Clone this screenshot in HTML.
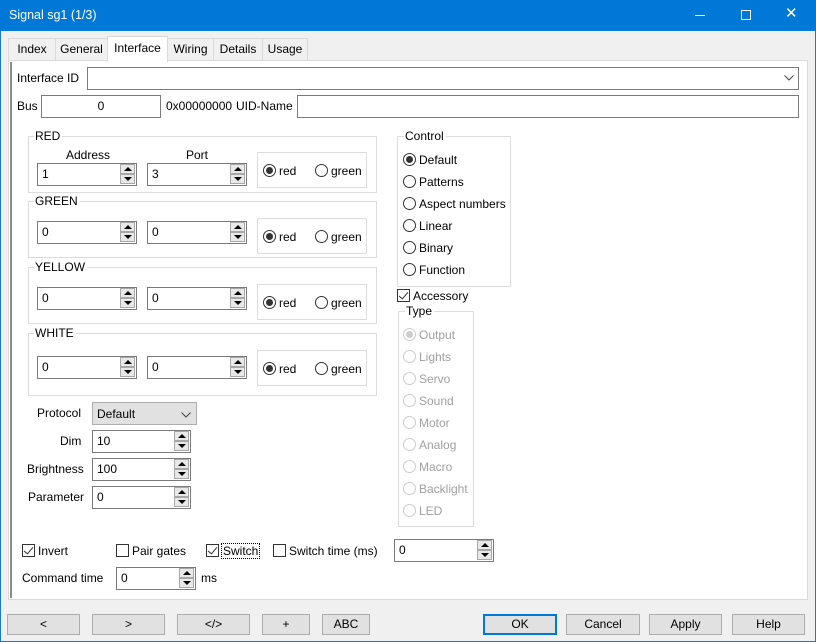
<!DOCTYPE html>
<html><head><meta charset="utf-8"><style>
*{margin:0;padding:0;box-sizing:border-box}
body{width:816px;height:642px;background:#f0f0f0;font-family:"Liberation Sans",sans-serif;font-size:12px;color:#000;position:relative;overflow:hidden}
.a{position:absolute}
.t{position:absolute;line-height:14px;white-space:nowrap}
.win{position:absolute;left:0;top:0;width:816px;height:642px;border:1px solid #1979ca}
.title{position:absolute;left:0;top:0;width:816px;height:31px;background:#0078d7;color:#fff}
.tab{position:absolute;top:38px;height:23px;background:#f0f0f0;border:1px solid #d9d9d9;border-bottom:none;line-height:20px;text-align:center}
.panel{position:absolute;left:8px;top:60px;width:800px;height:540px;background:#fff;border:1px solid #d9d9d9}
.in{position:absolute;height:23px;border:1px solid #7a7a7a;background:#fff}
.sp{position:absolute;height:23px;border:1px solid #7a7a7a;background:#fff}
.sp span{position:absolute;left:4px;top:3px;line-height:14px}
.u,.d{position:absolute;right:1px;width:15px;height:10px;background:#e8e8e8;border:1px solid #a8a8a8}
.u{top:0}.d{top:10px}
.u:after{content:"";position:absolute;left:3px;top:2px;border-left:4px solid transparent;border-right:4px solid transparent;border-bottom:4px solid #000}
.d:after{content:"";position:absolute;left:3px;top:2px;border-left:4px solid transparent;border-right:4px solid transparent;border-top:4px solid #000}
.g{position:absolute;border:1px solid #dcdcdc}
.gt{position:absolute;background:#fff;line-height:14px;padding:0 2px 0 1px;top:-8px;left:5px}
.r{position:absolute;width:13px;height:13px;border:1px solid #333;border-radius:50%;background:#fff}
.r.on:after{content:"";position:absolute;left:2px;top:2px;width:7px;height:7px;border-radius:50%;background:#333}
.r.dis{border-color:#ccc}
.r.dis.on:after{background:#ccc}
.c{position:absolute;width:13px;height:13px;border:1px solid #333;background:#fff}
.c.on:after{content:"";position:absolute;left:3px;top:0px;width:4px;height:8px;border:solid #333;border-width:0 1px 1px 0;transform:rotate(40deg)}
.gr{color:#a0a0a0}
.btn{position:absolute;top:614px;height:21px;background:#e1e1e1;border:1px solid #adadad;text-align:center;line-height:19px}
</style></head><body>
<div class="win"></div>
<div class="title">
<div class="t" style="left:9px;top:8px;font-size:12.5px">Signal sg1 (1/3)</div>
<div class="a" style="left:695px;top:15px;width:10px;height:1px;background:#fff"></div>
<div class="a" style="left:741px;top:10px;width:10px;height:10px;border:1px solid #fff"></div>
<div class="t" style="left:785px;top:7px;font-size:15px">✕</div>
</div>
<div class="tab" style="left:8px;width:48px">Index</div>
<div class="tab" style="left:55px;width:53px">General</div>
<div class="tab" style="left:167px;width:47px">Wiring</div>
<div class="tab" style="left:213px;width:50px">Details</div>
<div class="tab" style="left:262px;width:46px">Usage</div>
<div class="panel"></div>
<div class="a" style="left:10px;top:62px;width:2px;height:536px;background:#8a8a8a"></div>
<div class="tab" style="left:107px;top:36px;width:61px;height:26px;background:#fff;border-color:#d9d9d9;line-height:22px">Interface</div>

<div class="t" style="left:17px;top:71px">Interface ID</div>
<div class="in" style="left:87px;top:67px;width:712px"></div>
<svg class="a" style="left:784px;top:75px" width="10" height="6"><path d="M0.5 0.5 L5 5 L9.5 0.5" fill="none" stroke="#444" stroke-width="1"/></svg>
<div class="t" style="left:17px;top:99px">Bus</div>
<div class="in" style="left:41px;top:95px;width:120px"><div class="t" style="left:0;width:118px;text-align:center;top:3px">0</div></div>
<div class="t" style="left:166px;top:99px">0x00000000</div>
<div class="t" style="left:236px;top:99px">UID-Name</div>
<div class="in" style="left:297px;top:95px;width:502px"></div>

<div class="g" style="left:28px;top:136px;width:349px;height:57px"><div class="gt">RED</div></div>
<div class="t" style="left:66px;top:148px">Address</div>
<div class="t" style="left:186px;top:148px">Port</div>
<div class="sp" style="left:37px;top:163px;width:100px"><span>1</span><i class="u"></i><i class="d"></i></div>
<div class="sp" style="left:147px;top:163px;width:100px"><span>3</span><i class="u"></i><i class="d"></i></div>
<div class="g" style="left:257px;top:152px;width:110px;height:36px"></div>
<div class="r on" style="left:263px;top:164px"></div><div class="t" style="left:279px;top:164px">red</div>
<div class="r" style="left:315px;top:164px"></div><div class="t" style="left:331px;top:164px">green</div>

<div class="g" style="left:28px;top:201px;width:349px;height:57px"><div class="gt">GREEN</div></div>
<div class="sp" style="left:37px;top:221px;width:100px"><span>0</span><i class="u"></i><i class="d"></i></div>
<div class="sp" style="left:147px;top:221px;width:100px"><span>0</span><i class="u"></i><i class="d"></i></div>
<div class="g" style="left:257px;top:218px;width:110px;height:36px"></div>
<div class="r on" style="left:263px;top:230px"></div><div class="t" style="left:279px;top:230px">red</div>
<div class="r" style="left:315px;top:230px"></div><div class="t" style="left:331px;top:230px">green</div>

<div class="g" style="left:28px;top:267px;width:349px;height:57px"><div class="gt">YELLOW</div></div>
<div class="sp" style="left:37px;top:287px;width:100px"><span>0</span><i class="u"></i><i class="d"></i></div>
<div class="sp" style="left:147px;top:287px;width:100px"><span>0</span><i class="u"></i><i class="d"></i></div>
<div class="g" style="left:257px;top:284px;width:110px;height:36px"></div>
<div class="r on" style="left:263px;top:296px"></div><div class="t" style="left:279px;top:296px">red</div>
<div class="r" style="left:315px;top:296px"></div><div class="t" style="left:331px;top:296px">green</div>

<div class="g" style="left:28px;top:333px;width:349px;height:63px"><div class="gt">WHITE</div></div>
<div class="sp" style="left:37px;top:356px;width:100px"><span>0</span><i class="u"></i><i class="d"></i></div>
<div class="sp" style="left:147px;top:356px;width:100px"><span>0</span><i class="u"></i><i class="d"></i></div>
<div class="g" style="left:257px;top:350px;width:110px;height:36px"></div>
<div class="r on" style="left:263px;top:362px"></div><div class="t" style="left:279px;top:362px">red</div>
<div class="r" style="left:315px;top:362px"></div><div class="t" style="left:331px;top:362px">green</div>

<div class="t" style="left:37px;top:406px">Protocol</div>
<div class="a" style="left:92px;top:402px;width:105px;height:23px;background:#e1e1e1;border:1px solid #adadad"><div class="t" style="left:4px;top:4px">Default</div><svg class="a" style="left:88px;top:9px" width="10" height="6"><path d="M0.5 0.5 L5 5 L9.5 0.5" fill="none" stroke="#444" stroke-width="1"/></svg></div>
<div class="t" style="left:60px;top:434px">Dim</div>
<div class="sp" style="left:92px;top:430px;width:99px"><span>10</span><i class="u"></i><i class="d"></i></div>
<div class="t" style="left:27px;top:462px">Brightness</div>
<div class="sp" style="left:92px;top:458px;width:99px"><span>100</span><i class="u"></i><i class="d"></i></div>
<div class="t" style="left:28px;top:490px">Parameter</div>
<div class="sp" style="left:92px;top:486px;width:99px"><span>0</span><i class="u"></i><i class="d"></i></div>

<div class="g" style="left:397px;top:136px;width:114px;height:151px"><div class="gt" style="left:6px">Control</div></div>
<div class="r on" style="left:403px;top:153px"></div><div class="t" style="left:419px;top:153px">Default</div>
<div class="r" style="left:403px;top:175px"></div><div class="t" style="left:419px;top:175px">Patterns</div>
<div class="r" style="left:403px;top:197px"></div><div class="t" style="left:419px;top:197px">Aspect numbers</div>
<div class="r" style="left:403px;top:219px"></div><div class="t" style="left:419px;top:219px">Linear</div>
<div class="r" style="left:403px;top:241px"></div><div class="t" style="left:419px;top:241px">Binary</div>
<div class="r" style="left:403px;top:263px"></div><div class="t" style="left:419px;top:263px">Function</div>
<div class="c on" style="left:397px;top:289px"></div><div class="t" style="left:413px;top:289px">Accessory</div>

<div class="g" style="left:398px;top:311px;width:76px;height:216px"><div class="gt" style="left:6px">Type</div></div>
<div class="r dis on" style="left:403px;top:328px"></div><div class="t gr" style="left:419px;top:328px">Output</div>
<div class="r dis" style="left:403px;top:350px"></div><div class="t gr" style="left:419px;top:350px">Lights</div>
<div class="r dis" style="left:403px;top:372px"></div><div class="t gr" style="left:419px;top:372px">Servo</div>
<div class="r dis" style="left:403px;top:394px"></div><div class="t gr" style="left:419px;top:394px">Sound</div>
<div class="r dis" style="left:403px;top:416px"></div><div class="t gr" style="left:419px;top:416px">Motor</div>
<div class="r dis" style="left:403px;top:438px"></div><div class="t gr" style="left:419px;top:438px">Analog</div>
<div class="r dis" style="left:403px;top:460px"></div><div class="t gr" style="left:419px;top:460px">Macro</div>
<div class="r dis" style="left:403px;top:482px"></div><div class="t gr" style="left:419px;top:482px">Backlight</div>
<div class="r dis" style="left:403px;top:504px"></div><div class="t gr" style="left:419px;top:504px">LED</div>

<div class="c on" style="left:22px;top:544px"></div><div class="t" style="left:38px;top:544px">Invert</div>
<div class="c" style="left:116px;top:544px"></div><div class="t" style="left:132px;top:544px">Pair gates</div>
<div class="c on" style="left:206px;top:544px"></div><div class="t" style="left:221px;top:543px;border:1px dotted #000;padding:0 1px">Switch</div>
<div class="c" style="left:273px;top:544px"></div><div class="t" style="left:289px;top:544px">Switch time (ms)</div>
<div class="sp" style="left:394px;top:539px;width:100px"><span>0</span><i class="u"></i><i class="d"></i></div>
<div class="t" style="left:22px;top:571px">Command time</div>
<div class="sp" style="left:116px;top:567px;width:80px"><span>0</span><i class="u"></i><i class="d"></i></div>
<div class="t" style="left:201px;top:571px">ms</div>

<div class="btn" style="left:7px;width:73px">&lt;</div>
<div class="btn" style="left:92px;width:73px">&gt;</div>
<div class="btn" style="left:177px;width:73px">&lt;/&gt;</div>
<div class="btn" style="left:262px;width:48px">+</div>
<div class="btn" style="left:322px;width:48px">ABC</div>
<div class="btn" style="left:483px;width:74px;border:2px solid #0078d7;line-height:17px">OK</div>
<div class="btn" style="left:566px;width:74px">Cancel</div>
<div class="btn" style="left:649px;width:73px">Apply</div>
<div class="btn" style="left:732px;width:73px">Help</div>
</body></html>
